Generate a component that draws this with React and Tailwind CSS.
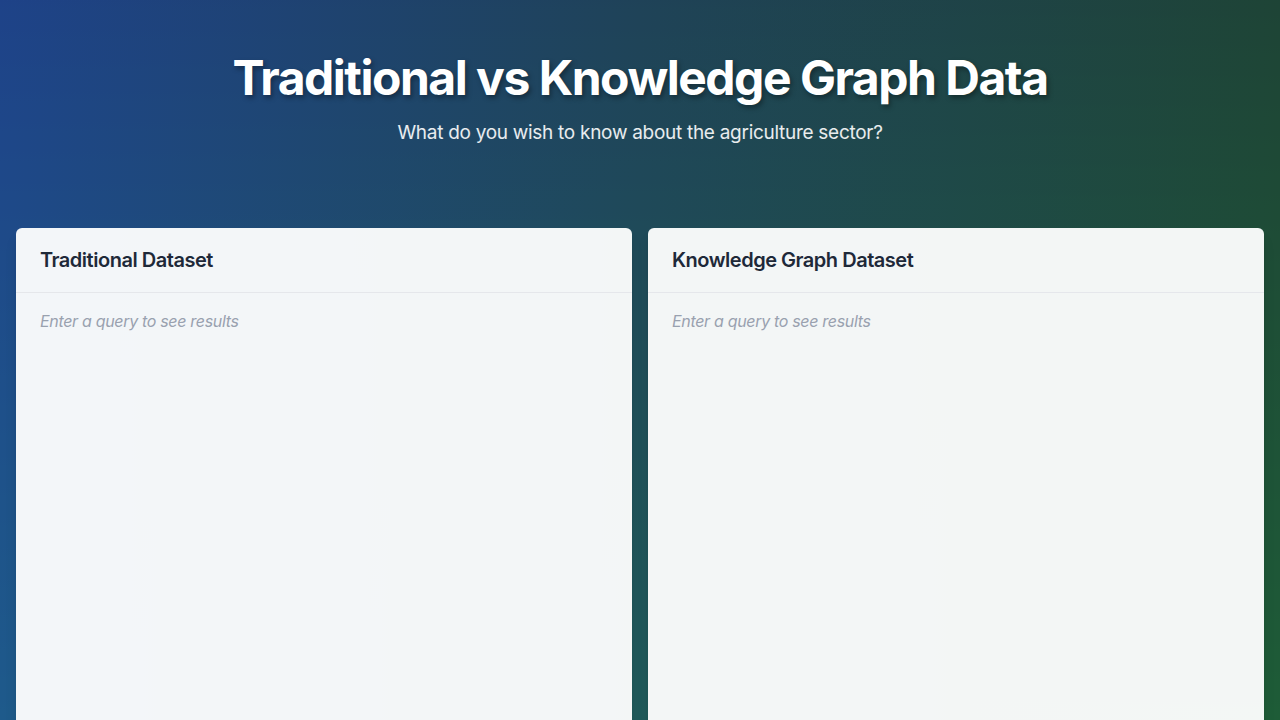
export default function App() {
  return (
    <div
      className="min-h-screen w-full bg-[linear-gradient(to_bottom,rgb(255,188,250),rgb(255,255,255)_720px),linear-gradient(to_right,#1e5a8b,#1f5a5a_50%,#1e5c37)] bg-blend-multiply"
      style={{ fontFamily: 'Inter, "Noto Sans", sans-serif' }}
    >
      <header className="pt-[54px] pb-[81px] text-center">
        <h1 className="text-[48px] leading-[48px] font-bold text-white tracking-[-0.031em] [text-shadow:2px_3px_5px_rgba(0,0,0,0.35)]">
          Traditional vs Knowledge Graph Data
        </h1>
        <p className="mt-[17px] text-[19px] leading-7 tracking-[-0.015em] text-white/90">
          What do you wish to know about the agriculture sector?
        </p>
      </header>
      <main className="grid grid-cols-2 gap-4 px-4 pb-8">
        {["Traditional Dataset", "Knowledge Graph Dataset"].map((t) => (
          <section
            key={t}
            className="min-h-[600px] rounded-md bg-white/95 shadow-lg"
          >
            <div className="flex h-[65px] items-center border-b border-gray-200 px-6">
              <h2 className="text-xl font-semibold tracking-[-0.024em] text-gray-800">
                {t}
              </h2>
            </div>
            <div className="px-6 pt-4 pb-4">
              <p className="text-base italic tracking-[-0.02em] text-gray-400">
                Enter a query to see results
              </p>
            </div>
          </section>
        ))}
      </main>
    </div>
  );
}
